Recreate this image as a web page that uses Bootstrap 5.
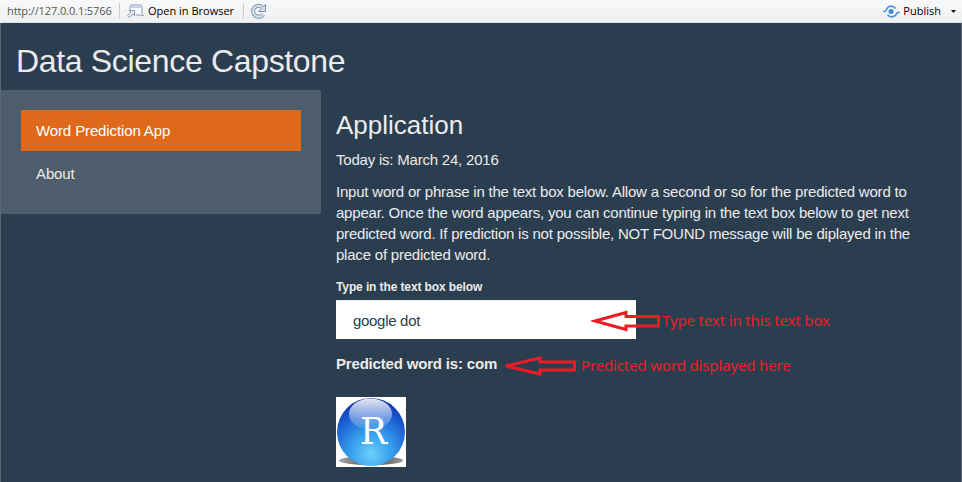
<!DOCTYPE html>
<html lang="en">
<head>
<meta charset="utf-8">
<title>Data Science Capstone</title>
<link href="https://cdn.jsdelivr.net/npm/bootstrap@5.3.0/dist/css/bootstrap.min.css" rel="stylesheet">
<style>
body{font-family:"Liberation Sans",Arial,sans-serif;font-size:15px;line-height:21px;letter-spacing:-.21px;color:#ebebeb;background:#2b3e50;overflow:hidden}
.app-frame{height:482px;border-left:1px solid #5b6977;border-right:1px solid #5b6977}
.viewer-bar{height:23px;margin:0 -1px;padding:0 6px 0 7px;background:linear-gradient(#f8f9fa,#eef0f2);border-bottom:1px solid #e1e4e7;font:11px/22px "Open Sans","Noto Sans",sans-serif;letter-spacing:0;color:#000;white-space:nowrap}
.url-text{color:#555;width:112px;letter-spacing:-.1px}
.bar-rule{width:1px;height:16px;background:#c9ced3}
.second-rule{margin-left:9px}
.reload-icon{margin-left:6px}
.open-icon{margin-left:7px}
.publish-text{margin-left:3px}
.caret-icon{margin-left:10px}
.page-title{font-size:32px;line-height:35px;margin:21px 0 11px;padding-left:15px;font-weight:400;letter-spacing:-.33px}
.side-well{background:#4e5d6c;height:124px;padding:20px;gap:2px;letter-spacing:-.12px}
.side-well .nav-link{color:#ebebeb;border-radius:0;padding:10px 15px;line-height:21px;height:41px}
.side-well .nav-link.active{background:#df691a;color:#fff}
.main-col{padding:0 15px}
.section-title{font-size:26px;line-height:29px;margin:21px 0 9px;font-weight:400;letter-spacing:0}
.main-col p{margin:0 0 11px}
.field-label{font-size:12px;line-height:17px;font-weight:700;margin:14px 0 4px;display:block;letter-spacing:-.11px}
.word-input{width:300px;height:39px;border:0;border-radius:0;padding:9px 17px 7px;font-size:15px;letter-spacing:-.3px;color:#2b3e50;box-shadow:inset 0 1px 1px rgba(0,0,0,.075)}
.prediction{font-weight:700;font-size:15px;line-height:17px;margin-top:16px;letter-spacing:-.18px}
.note{position:absolute;color:#ed1c24;font:15px/20px "Noto Sans","Open Sans",sans-serif;letter-spacing:-.14px;white-space:nowrap}
.note-input{left:326px;top:10px}
.note-word{left:245px;top:55px}
.arrow{position:absolute;fill:none;stroke:#ed1c24;stroke-width:3}
.arrow-input{left:255px;top:10px}
.arrow-word{left:166px;top:55px}
.r-logo{display:block;margin-top:25px}
</style>
</head>
<body>
<div class="app-frame">
  <div class="viewer-bar d-flex align-items-center">
    <span class="url-text">http://127.0.0.1:5766</span>
    <span class="bar-rule"></span>
    <svg class="open-icon" width="17" height="16" viewBox="0 0 17 16"><path d="M3 8V4q0-2 2-2h8.500q1.500 0 1.500 2v8H8.500" fill="#fafcff" stroke="#8b9bb5"/><path d="M4 4h10" stroke="#c0d4ef" stroke-width="2"/><path d="M15 12.500h2" stroke="#9aa7bb"/><path d="M2.500 7.500h5v5L6 11l-3.500 3.500L.7 12.700 4 9.200z" fill="#eaf0f8" stroke="#7e8fab" stroke-width=".9"/></svg>
    <span class="ms-1">Open in Browser</span>
    <span class="bar-rule second-rule"></span>
    <svg class="reload-icon" width="17" height="17" viewBox="0 0 17 17"><path d="M13.200 11.300A5.500 5.500 0 1 1 12.700 4.600" fill="none" stroke="#8593ac" stroke-width="4"/><path d="M15.500 1.500v7H8.500l3-3z" fill="#d5e0ef" stroke="#8593ac"/><path d="M13.200 11.300A5.500 5.500 0 1 1 12.700 4.600" fill="none" stroke="#d5e0ef" stroke-width="2.200"/></svg>
    <svg class="ms-auto" width="17" height="13" viewBox="0 0 17 13"><g fill="none" stroke="#5a94da" stroke-width="1.700"><path d="M0 6.500h2.500Q4.500 1.200 8 1.200 11 1.300 12.500 3.500"/><path d="M17 7.500h-2.500Q12 12 8.500 11.800 6 11.500 4.500 9.700"/></g><circle cx="8" cy="6.500" r="2.500" fill="#4387dc"/></svg>
    <span class="publish-text">Publish</span>
    <svg class="caret-icon" width="5" height="3"><path d="M0 0h5L2.500 3z" fill="#111"/></svg>
  </div>
  <h1 class="page-title">Data Science Capstone</h1>
  <div class="row g-0">
    <aside class="col-4">
      <nav class="side-well nav nav-pills flex-column flex-nowrap">
        <a class="nav-link active" href="#">Word Prediction App</a>
        <a class="nav-link" href="#">About</a>
      </nav>
    </aside>
    <main class="col-8 main-col">
      <h2 class="section-title">Application</h2>
      <p>Today is: March 24, 2016</p>
      <p>Input word or phrase in the text box below. Allow a second or so for the predicted word to appear. Once the word appears, you can continue typing in the text box below to get next predicted word. If prediction is not possible, NOT FOUND message will be diplayed in the place of predicted word.</p>
      <label class="field-label" for="word">Type in the text box below</label>
      <div class="position-relative">
        <input id="word" class="form-control word-input" value="google dot">
        <div class="prediction">Predicted word is: com</div>
        <svg class="arrow arrow-input" width="70" height="22"><path d="M4 11L35 2.500V6.500H67.500V16H35V19.500z"/></svg>
        <span class="note note-input">Type text in this text box</span>
        <svg class="arrow arrow-word" width="75" height="22"><path d="M4 11L38 3V7H72.500V15H38V19z"/></svg>
        <span class="note note-word">Predicted word displayed here</span>
      </div>
      <svg class="r-logo" width="70" height="70" viewBox="0 0 70 70">
        <defs>
          <radialGradient id="ball" cx=".5" cy=".82" r=".8"><stop offset="0" stop-color="#6cd0fb"/><stop offset=".4" stop-color="#359bec"/><stop offset=".75" stop-color="#1c5fd4"/><stop offset="1" stop-color="#1137a8"/></radialGradient>
          <linearGradient id="gloss" x2="0" y2="1"><stop offset="0" stop-color="#fff" stop-opacity=".9"/><stop offset="1" stop-color="#fff" stop-opacity=".08"/></linearGradient>
          <linearGradient id="shade"><stop offset="0" stop-color="#aaa"/><stop offset=".5" stop-color="#444"/><stop offset="1" stop-color="#999"/></linearGradient>
        </defs>
        <path d="M0 0h70v70H0z" fill="#fff"/>
        <ellipse cx="35" cy="63.500" rx="32" ry="4.500" fill="url(#shade)"/>
        <circle cx="35" cy="35" r="34" fill="url(#ball)"/>
        <ellipse cx="34.500" cy="17" rx="21.500" ry="15.500" fill="url(#gloss)"/>
        <text x="24" y="47" font-family="DejaVu Serif, serif" font-size="38" textLength="27" lengthAdjust="spacingAndGlyphs" fill="#fff" letter-spacing="0">R</text>
      </svg>
    </main>
  </div>
</div>
</body>
</html>
